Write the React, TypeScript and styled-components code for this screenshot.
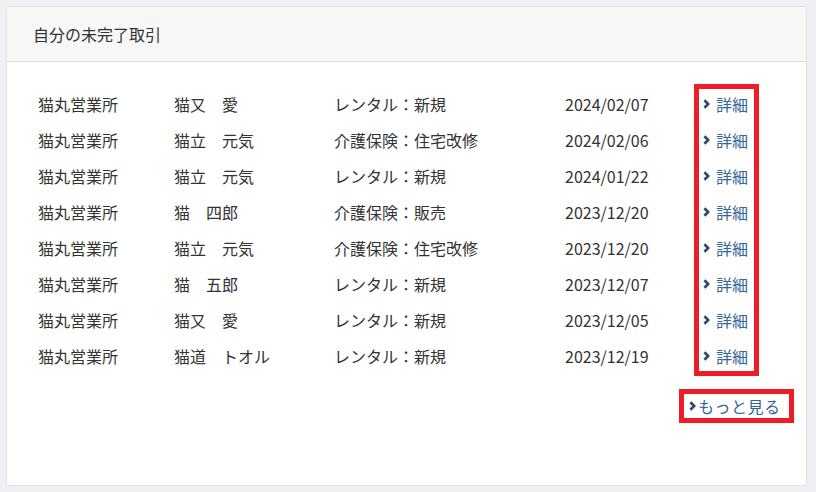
import React from "react";
import styled, { createGlobalStyle } from "styled-components";

const Global = createGlobalStyle`
  html, body { margin: 0; padding: 0; background: #eef0f3; }
  body { font-family: "Noto Sans CJK JP", "Open Sans", sans-serif; color: #333; }
`;

const Page = styled.div`
  padding: 6px 9px 6px 6px;
`;

const Card = styled.section`
  width: 801px;
  height: 480px;
  box-sizing: border-box;
  background: #fff;
  border: 1px solid #dfe1e5;
  border-radius: 4px;
  overflow: hidden;
  display: flex;
  flex-direction: column;
`;

const Header = styled.header`
  height: 55px;
  box-sizing: border-box;
  background: #f7f7f7;
  border-bottom: 1px solid #dcdcdc;
  display: flex;
  align-items: center;
  padding: 0 0 0 26px;
  font-size: 16px;
  color: #333;
`;

const Body = styled.div`
  padding: 24px 12px 0 31px;
  display: flex;
  flex-direction: column;
`;

const Table = styled.div`
  display: grid;
  grid-template-columns: 136px 160px 231px 129px 65px;
  grid-auto-rows: 36px;
  font-size: 16px;
`;

const Cell = styled.div`
  display: flex;
  align-items: center;
  white-space: pre;
  color: #333;
`;

const DetailColumn = styled.div`
  grid-column: 5;
  grid-row: 1 / span 8;
  align-self: start;
  margin-top: -2px;
  border: 5px solid #ee1c25;
  display: flex;
  flex-direction: column;
  gap: 6px;
`;

const DetailLink = styled.a`
  height: 30px;
  display: flex;
  align-items: center;
  gap: 6px;
  padding-left: 4px;
  color: #336699;
  text-decoration: none;
  font-size: 16px;
`;

const Footer = styled.div`
  display: flex;
  justify-content: flex-end;
  margin-top: 15px;
`;

const MoreLink = styled.a`
  border: 5px solid #ee1c25;
  width: 115px;
  height: 34px;
  box-sizing: border-box;
  display: flex;
  align-items: center;
  gap: 2px;
  padding: 0 0 0 5px;
  color: #336699;
  text-decoration: none;
  font-size: 16px;
  letter-spacing: 0.5px;
`;

const Chevron = () => (
  <svg width="7" height="10" viewBox="0 0 7 10" aria-hidden="true" style={{ flex: "none" }}>
    <path d="M1.4 1.2 L5.2 5 L1.4 8.8" fill="none" stroke="#2d4a6b" strokeWidth="2.7" strokeLinejoin="miter" />
  </svg>
);

const rows = [
  ["猫丸営業所", "猫又　愛", "レンタル：新規", "2024/02/07"],
  ["猫丸営業所", "猫立　元気", "介護保険：住宅改修", "2024/02/06"],
  ["猫丸営業所", "猫立　元気", "レンタル：新規", "2024/01/22"],
  ["猫丸営業所", "猫　四郎", "介護保険：販売", "2023/12/20"],
  ["猫丸営業所", "猫立　元気", "介護保険：住宅改修", "2023/12/20"],
  ["猫丸営業所", "猫　五郎", "レンタル：新規", "2023/12/07"],
  ["猫丸営業所", "猫又　愛", "レンタル：新規", "2023/12/05"],
  ["猫丸営業所", "猫道　トオル", "レンタル：新規", "2023/12/19"],
];

export default function App() {
  return (
    <>
      <Global />
      <Page>
        <Card>
          <Header>自分の未完了取引</Header>
          <Body>
            <Table>
              {rows.map((r, i) => (
                <React.Fragment key={i}>
                  <Cell style={{ gridRow: i + 1, gridColumn: 1 }}>{r[0]}</Cell>
                  <Cell style={{ gridRow: i + 1, gridColumn: 2 }}>{r[1]}</Cell>
                  <Cell style={{ gridRow: i + 1, gridColumn: 3 }}>{r[2]}</Cell>
                  <Cell style={{ gridRow: i + 1, gridColumn: 4 }}>{r[3]}</Cell>
                </React.Fragment>
              ))}
              <DetailColumn>
                {rows.map((_, i) => (
                  <DetailLink key={i} href="#">
                    <Chevron />
                    詳細
                  </DetailLink>
                ))}
              </DetailColumn>
            </Table>
            <Footer>
              <MoreLink href="#">
                <Chevron />
                もっと見る
              </MoreLink>
            </Footer>
          </Body>
        </Card>
      </Page>
    </>
  );
}
